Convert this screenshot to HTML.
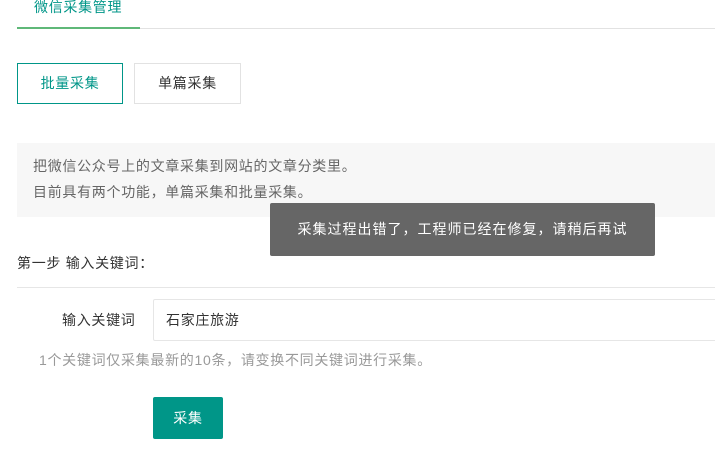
<!DOCTYPE html>
<html><head><meta charset="utf-8"><style>
*{margin:0;padding:0;box-sizing:border-box}
body{width:715px;height:451px;overflow:hidden;background:#fff;position:relative;font-family:"Liberation Sans","Noto Sans CJK SC",sans-serif;font-size:14px;color:#333;letter-spacing:0.7px}
.a{position:absolute;white-space:nowrap}
</style></head><body>
<div class="a" style="left:34px;top:-3px;color:#009688;line-height:20px">微信采集管理</div>
<div class="a" style="left:17px;top:28px;width:698px;height:1px;background:#e2e2e2"></div>
<div class="a" style="left:17px;top:27px;width:123px;height:2px;background:#5fb878"></div>
<div class="a" style="left:17px;top:63px;width:106px;height:41px;border:1px solid #009688;color:#009688;text-align:center;line-height:39px">批量采集</div>
<div class="a" style="left:134px;top:63px;width:107px;height:41px;border:1px solid #e2e2e2;color:#333;text-align:center;line-height:39px">单篇采集</div>
<div class="a" style="left:17px;top:143px;width:698px;height:74px;background:#f7f7f7"></div>
<div class="a" style="left:33px;top:156px;color:#666;line-height:20px">把微信公众号上的文章采集到网站的文章分类里。</div>
<div class="a" style="left:33px;top:182px;color:#666;line-height:20px">目前具有两个功能，单篇采集和批量采集。</div>
<div class="a" style="left:270px;top:203px;width:385px;height:53px;background:#666;border-radius:2px;color:#fff;text-align:center;line-height:52px;letter-spacing:1px">采集过程出错了，工程师已经在修复，请稍后再试</div>
<div class="a" style="left:17px;top:253px;line-height:20px;color:#333">第一步 输入关键词：</div>
<div class="a" style="left:17px;top:287px;width:698px;height:1px;background:#e6e6e6"></div>
<div class="a" style="left:62px;top:310px;line-height:20px">输入关键词</div>
<div class="a" style="left:153px;top:299px;width:570px;height:42px;border:1px solid #e6e6e6;border-radius:2px;padding-left:12px;line-height:40px;color:#333">石家庄旅游</div>
<div class="a" style="left:39px;top:350px;color:#999;line-height:20px">1个关键词仅采集最新的10条，请变换不同关键词进行采集。</div>
<div class="a" style="left:153px;top:397px;width:70px;height:42px;background:#009688;border-radius:2px;color:#fff;text-align:center;line-height:42px">采集</div>
</body></html>
